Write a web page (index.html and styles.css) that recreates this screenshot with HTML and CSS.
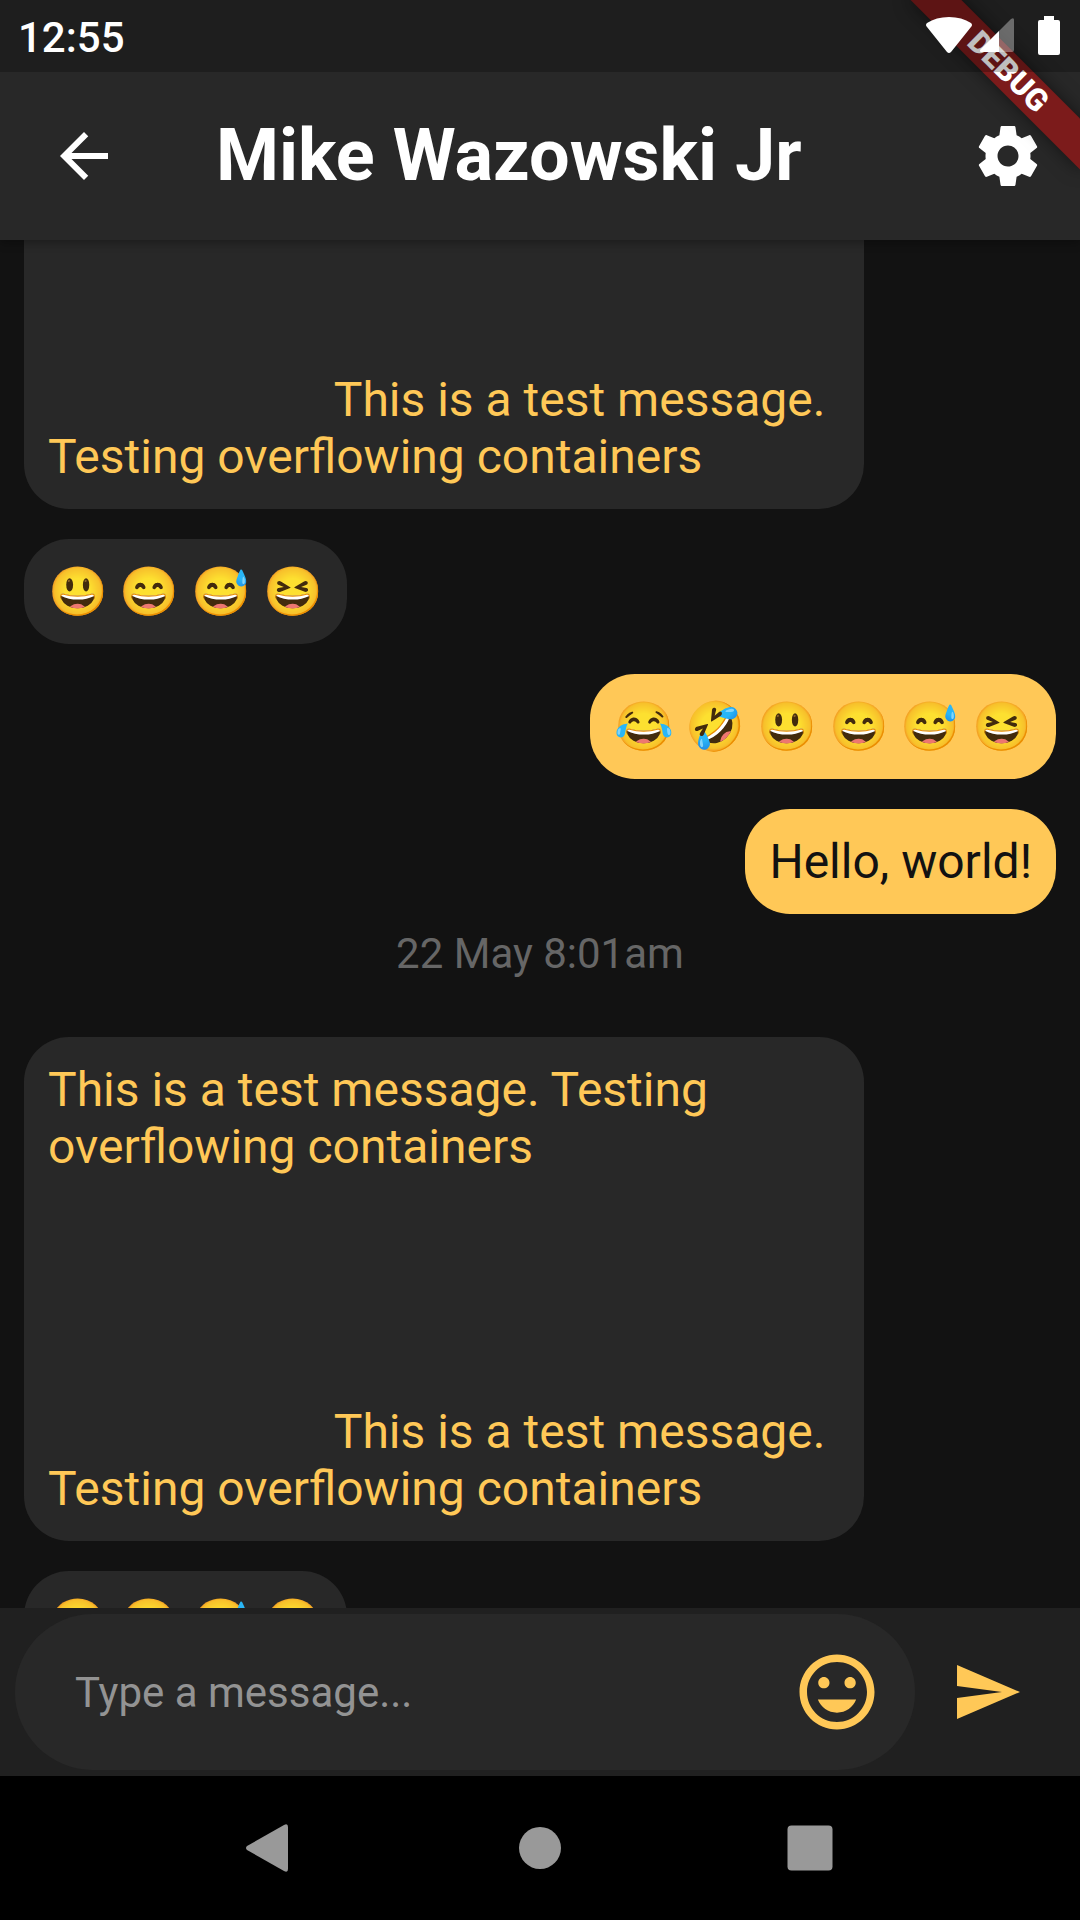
FILE: index.html
```html
<!DOCTYPE html>
<html lang="en">
<head>
<meta charset="utf-8">
<meta name="viewport" content="width=device-width, initial-scale=1">
<title>Mike Wazowski Jr</title>
<link rel="stylesheet" href="styles.css">
</head>
<body>
<div class="screen">
  <div class="top">
    <div class="status-bar">
      <span class="clock">12:55</span>
      <span class="status-icons">
        <svg class="wifi" viewBox="0 0 46 36" aria-hidden="true"><path d="M1 10Q-1 8 1 6Q10 0 23 0T45 6Q47 8 45 10L25 35Q23 37 21 35Z"/></svg>
        <svg class="signal" viewBox="0 0 34 34" aria-hidden="true"><path d="M1 34Q-1 33 1 31L31 1Q34-1 34 2V32Q34 34 32 34Z" opacity=".35"/><path d="M1 34Q-1 33 1 31L19 13V34Z"/></svg>
        <svg class="battery" viewBox="0 0 22 39" aria-hidden="true"><path d="M6 0h10v4h4q2 0 2 2v31q0 2-2 2H2q-2 0-2-2V6q0-2 2-2h4Z"/></svg>
      </span>
    </div>
    <header class="app-bar">
      <button class="icon-button" type="button" aria-label="Back">
        <svg class="icon" viewBox="0 0 24 24"><path d="M20 11H7.83l5.59-5.59L12 4l-8 8 8 8 1.41-1.41L7.83 13H20v-2z"/></svg>
      </button>
      <h1 class="title">Mike Wazowski Jr</h1>
      <button class="icon-button" type="button" aria-label="Settings">
        <svg class="icon" viewBox="0 0 24 24"><path d="M19.43 12.98c.04-.32.07-.64.07-.98s-.03-.66-.07-.98l2.11-1.65c.19-.15.24-.42.12-.64l-2-3.46c-.12-.22-.39-.3-.61-.22l-2.49 1c-.52-.4-1.08-.73-1.69-.98l-.38-2.65C14.46 2.18 14.25 2 14 2h-4c-.25 0-.46.18-.49.42l-.38 2.65c-.61.25-1.17.59-1.69.98l-2.49-1c-.23-.09-.49 0-.61.22l-2 3.46c-.13.22-.07.49.12.64l2.11 1.65c-.04.32-.07.65-.07.98s.03.66.07.98l-2.11 1.65c-.19.15-.24.42-.12.64l2 3.46c.12.22.39.3.61.22l2.49-1c.52.4 1.08.73 1.69.98l.38 2.65c.03.24.24.42.49.42h4c.25 0 .46-.18.49-.42l.38-2.65c.61-.25 1.17-.59 1.69-.98l2.49 1c.23.09.49 0 .61-.22l2-3.46c.12-.22.07-.49-.12-.64l-2.11-1.65zM12 15.5c-1.93 0-3.5-1.57-3.5-3.5s1.57-3.5 3.5-3.5 3.5 1.57 3.5 3.5-1.57 3.5-3.5 3.5z"/></svg>
      </button>
    </header>
    <div class="debug-corner"><span class="debug-banner">DEBUG</span></div>
  </div>

  <main class="chat">
    <div class="messages">
      <p class="bubble received">



                        This is a test message. Testing overflowing containers</p>
      <p class="bubble received">😃 😄 😅 😆</p>
      <p class="bubble sent">😂 🤣 😃 😄 😅 😆</p>
      <p class="bubble sent">Hello, world!</p>
      <time class="date">22 May 8:01am</time>
      <p class="bubble received">This is a test message. Testing overflowing containers




                        This is a test message. Testing overflowing containers</p>
      <p class="bubble received">😃 😄 😅 😆</p>
    </div>
  </main>

  <form class="composer">
    <div class="field">
      <input class="input" type="text" placeholder="Type a message..." aria-label="Message">
      <button class="icon-button" type="button" aria-label="Insert emoji">
        <svg class="icon icon-large" viewBox="0 0 24 24"><path d="M11.99 2C6.47 2 2 6.48 2 12s4.47 10 9.99 10C17.52 22 22 17.52 22 12S17.52 2 11.99 2zM12 20c-4.42 0-8-3.58-8-8s3.58-8 8-8 8 3.58 8 8-3.58 8-8 8zm3.5-9c.83 0 1.5-.67 1.5-1.5S16.33 8 15.5 8 14 8.67 14 9.5s.67 1.5 1.5 1.5zm-7 0c.83 0 1.5-.67 1.5-1.5S9.33 8 8.5 8 7 8.67 7 9.5 7.67 11 8.5 11zm3.5 6.5c2.33 0 4.31-1.46 5.11-3.5H6.89c.8 2.04 2.78 3.5 5.11 3.5z"/></svg>
      </button>
    </div>
    <button class="icon-button" type="submit" aria-label="Send">
      <svg class="icon" viewBox="0 0 24 24"><path d="M2.01 21L23 12 2.01 3 2 10l15 2-15 2z"/></svg>
    </button>
  </form>

  <nav class="system-nav">
    <button class="nav-button" type="button" aria-label="Back"><svg class="nav-icon" viewBox="0 0 48 48"><path d="M1 22Q-1 24 1 26L38 47Q42 49 42 45V3Q42-1 38 1Z"/></svg></button>
    <button class="nav-button" type="button" aria-label="Home"><svg class="nav-icon" viewBox="0 0 48 48"><circle cx="24" cy="24" r="21"/></svg></button>
    <button class="nav-button" type="button" aria-label="Overview"><svg class="nav-icon" viewBox="0 0 48 48"><rect x="1.5" y="1.5" width="45" height="45" rx="4"/></svg></button>
  </nav>
</div>
</body>
</html>
```
FILE: styles.css
```css
* {
  box-sizing: border-box;
}

body {
  margin: 0;
  background: #000;
  color: #fff;
  font-family: Roboto, "Noto Color Emoji", sans-serif;
}

button {
  padding: 0;
  border: 0;
  background: none;
  color: inherit;
}

svg {
  display: block;
  fill: currentColor;
}

.screen {
  display: flex;
  flex-direction: column;
  height: 100vh;
  background: #121212;
}

/* Status bar and app bar */

.top {
  position: relative;
  z-index: 1;
  background: #282828;
  box-shadow: 0 3px 9px rgba(0, 0, 0, 0.3);
}

.status-bar {
  position: relative;
  z-index: 2;
  display: flex;
  justify-content: space-between;
  height: 72px;
  padding: 12px 20px 14px 18px;
  background: rgba(0, 0, 0, 0.25);
}

.clock {
  font-size: 42px;
  font-weight: 500;
  line-height: 52px;
}

.status-icons {
  display: flex;
  align-items: center;
}

.wifi {
  width: 46px;
  height: 36px;
  margin-right: 8px;
}

.signal {
  width: 34px;
  height: 34px;
  margin-right: 24px;
}

.battery {
  width: 22px;
  height: 39px;
}

.app-bar {
  display: flex;
  align-items: center;
  justify-content: space-between;
  height: 168px;
  padding: 0 36px 0 48px;
}

.title {
  flex: 1;
  margin: 0;
  padding-left: 96px;
  font-size: 72px;
  font-weight: 700;
  line-height: 84px;
}

.icon {
  width: 72px;
  height: 72px;
}

.icon-large {
  width: 90px;
  height: 90px;
}

.debug-corner {
  position: absolute;
  inset: 0 0 0 auto;
  z-index: 1;
  width: 240px;
  overflow: hidden;
  pointer-events: none;
}

.debug-banner {
  position: absolute;
  top: 54px;
  right: -48px;
  width: 240px;
  background: #7c1b1b;
  box-shadow: 0 0 18px rgba(0, 0, 0, 0.5);
  font-size: 31px;
  font-weight: 900;
  line-height: 36px;
  text-align: center;
  transform: rotate(45deg);
}

/* Conversation */

.chat {
  display: flex;
  flex: 1;
  flex-direction: column;
  justify-content: flex-end;
  min-height: 0;
  overflow: hidden;
}

.messages {
  display: flex;
  flex-direction: column;
  gap: 30px;
  margin: 0 24px -68px;
}

.bubble {
  max-width: 840px;
  margin: 0;
  padding: 24px;
  border-radius: 45px;
  font-size: 48px;
  line-height: 57px;
  white-space: pre-wrap;
}

.received {
  align-self: flex-start;
  background: #282828;
  color: #ffc857;
}

.sent {
  align-self: flex-end;
  background: #ffc857;
  color: #121212;
}

.date {
  height: 78px;
  margin-top: -15px;
  color: #666;
  font-size: 42px;
  line-height: 50px;
  text-align: center;
}

/* Message composer */

.composer {
  position: relative;
  display: flex;
  align-items: center;
  gap: 36px;
  padding: 6px 57px 6px 15px;
  background: #202020;
  color: #ffc857;
}

.field {
  display: flex;
  flex: 1;
  align-items: center;
  height: 156px;
  padding: 0 33px 0 60px;
  border-radius: 78px;
  background: #282828;
}

.input {
  flex: 1;
  min-width: 0;
  padding: 2px 0 0;
  border: 0;
  outline: 0;
  background: none;
  color: #fff;
  font: 42px/50px Roboto, sans-serif;
}

.input::placeholder {
  color: #939393;
  opacity: 1;
}

/* System navigation */

.system-nav {
  display: flex;
  align-items: center;
  justify-content: center;
  gap: 222px;
  height: 144px;
  background: #000;
  color: #999;
}

.nav-icon {
  width: 48px;
  height: 48px;
}
```
